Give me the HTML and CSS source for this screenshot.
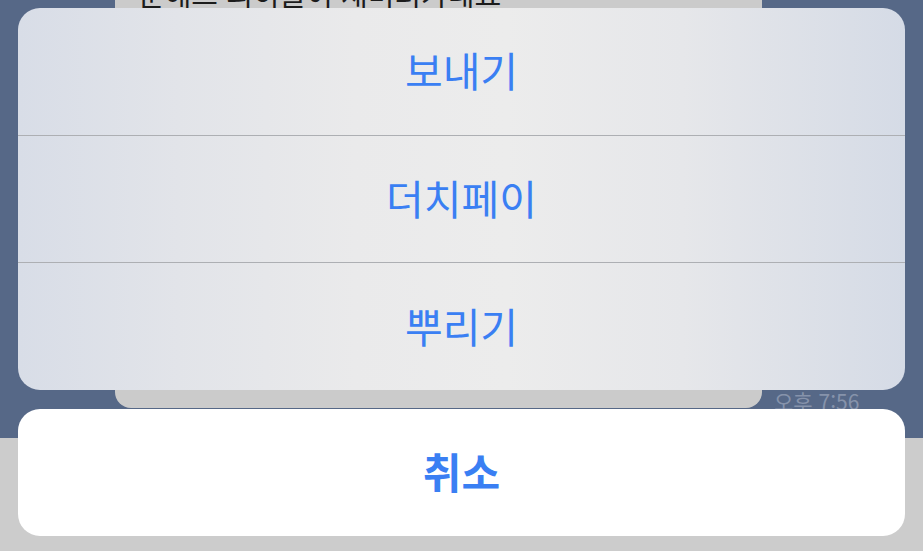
FILE: index.html
```html
<!DOCTYPE html>
<html lang="ko">
<head>
<meta charset="utf-8">
<link rel="stylesheet" href="styles.css">
</head>
<body>
<div class="screen">
  <div class="chat">
    <div class="bubble">
      <p class="bubble-text">문해그 괴히들이 재미러가네요</p>
    </div>
    <span class="time">오후 7:56</span>
  </div>
  <div class="footer"></div>

  <div class="overlay">
    <div class="sheet">
      <button class="action">보내기</button>
      <button class="action">더치페이</button>
      <button class="action">뿌리기</button>
    </div>
    <button class="cancel">취소</button>
  </div>
</div>
</body>
</html>
```

FILE: styles.css
```css
* { box-sizing: border-box; }
html, body {
  margin: 0;
  padding: 0;
  width: 923px;
  height: 551px;
  overflow: hidden;
  font-family: "Noto Sans CJK KR", "Noto Sans", sans-serif;
}
.screen {
  position: relative;
  width: 923px;
  height: 551px;
  background: #cccccc;
}
.chat {
  height: 438px;
  background: #566887;
  display: flex;
  align-items: flex-end;
  padding: 0 0 30px 115px;
}
.bubble {
  width: 647px;
  height: 408px;
  background: #cbcbcb;
  border-radius: 0 0 16px 16px;
  overflow: hidden;
  padding-left: 23px;
}
.bubble-text {
  margin: -21px 0 0 0;
  font-size: 29px;
  line-height: 29px;
  color: #1c1c1c;
  white-space: nowrap;
}
.time {
  margin-left: 12px;
  margin-bottom: -4px;
  font-size: 21px;
  line-height: 21px;
  color: #8693ab;
  white-space: nowrap;
}
.overlay {
  position: absolute;
  inset: 0;
  padding: 8px 18px 15px 18px;
  display: flex;
  flex-direction: column;
  gap: 19px;
}
.sheet {
  height: 382px;
  border-radius: 22px;
  overflow: hidden;
  display: flex;
  flex-direction: column;
  background: linear-gradient(90deg, #d8dde7 0%, #e2e4e9 18%, #eaeaeb 38%, #ececec 55%, #e6e7ea 75%, #d5dbe6 100%);
}
.action {
  flex: 1;
  border: 0;
  background: transparent;
  font-family: inherit;
  font-size: 41px;
  font-weight: 400;
  color: #3a7ff3;
  padding: 0 0 4px 0;
  display: flex;
  align-items: center;
  justify-content: center;
}
.action + .action {
  border-top: 1px solid #adafb3;
}
.cancel {
  height: 127px;
  border: 0;
  border-radius: 22px;
  background: #ffffff;
  font-family: inherit;
  font-size: 42px;
  font-weight: 700;
  color: #3a7ff3;
  padding: 0 0 4px 0;
}
```
